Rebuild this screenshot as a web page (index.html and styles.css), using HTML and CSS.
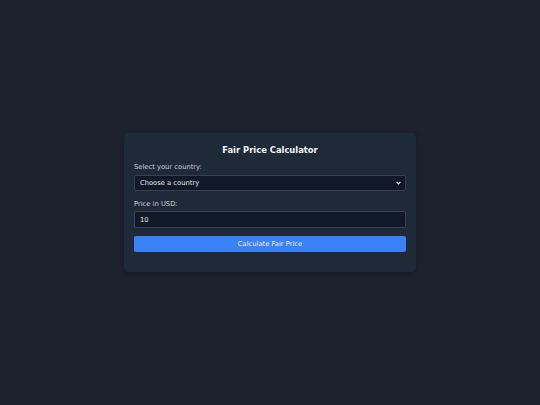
FILE: index.html
```html
<!DOCTYPE html>
<html lang="en">
<head>
<meta charset="utf-8">
<title>Fair Price Calculator</title>
<link rel="stylesheet" href="styles.css">
</head>
<body>
<main class="page">
  <section class="card">
    <h1 class="title">Fair Price Calculator</h1>
    <div class="field">
      <label class="label" for="country">Select your country:</label>
      <div class="select-wrap">
        <select id="country" class="control select">
          <option>Choose a country</option>
        </select>
        <svg class="chevron" width="5" height="4" viewBox="0 0 5 4" aria-hidden="true"><path d="M0.6 0.8 L2.5 2.8 L4.4 0.8" fill="none" stroke="#e5e7eb" stroke-width="1.2"/></svg>
      </div>
    </div>
    <div class="field">
      <label class="label" for="price">Price in USD:</label>
      <input id="price" class="control input" type="text" value="10">
    </div>
    <button class="button" type="button">Calculate Fair Price</button>
  </section>
</main>
</body>
</html>
```

FILE: styles.css
```css
* { box-sizing: border-box; }
html, body { margin: 0; height: 100%; }
body {
  background: #1e222f;
  font-family: "DejaVu Sans", Verdana, sans-serif;
  color: #e5e7eb;
}
.page {
  height: 100%;
  display: flex;
  align-items: center;
  justify-content: center;
}
.card {
  width: 292px;
  background: #1f2a38;
  border-radius: 4px;
  padding: 11px 10px 20px;
  display: flex;
  flex-direction: column;
  box-shadow: 0 2px 6px rgba(0,0,0,0.25);
}
.title {
  margin: 0 0 6.5px;
  font-size: 8.4px;
  line-height: 12px;
  font-weight: bold;
  text-align: center;
  color: #f3f4f6;
}
.field {
  display: flex;
  flex-direction: column;
}
.field + .field { margin-top: 8px; }
.label {
  font-size: 6.75px;
  line-height: 10px;
  margin-bottom: 2.7px;
  color: #cbd0d8;
}
.select-wrap { position: relative; }
.control {
  width: 100%;
  margin: 0;
  background: #111827;
  border: 1px solid #374151;
  border-radius: 2px;
  color: #e5e7eb;
  font-family: "DejaVu Sans", Verdana, sans-serif;
  font-size: 6.75px;
  padding: 0 5px;
  outline: none;
}
.select {
  height: 16px;
  appearance: none;
  -webkit-appearance: none;
  display: block;
}
.chevron {
  position: absolute;
  right: 5px;
  top: 6px;
}
.input { height: 17px; }
.button {
  margin-top: 7.5px;
  height: 16.5px;
  background: #3b82f6;
  border: none;
  border-radius: 2px;
  color: #e8eefc;
  font-family: "DejaVu Sans", Verdana, sans-serif;
  font-size: 6.75px;
  padding: 0;
}
```
